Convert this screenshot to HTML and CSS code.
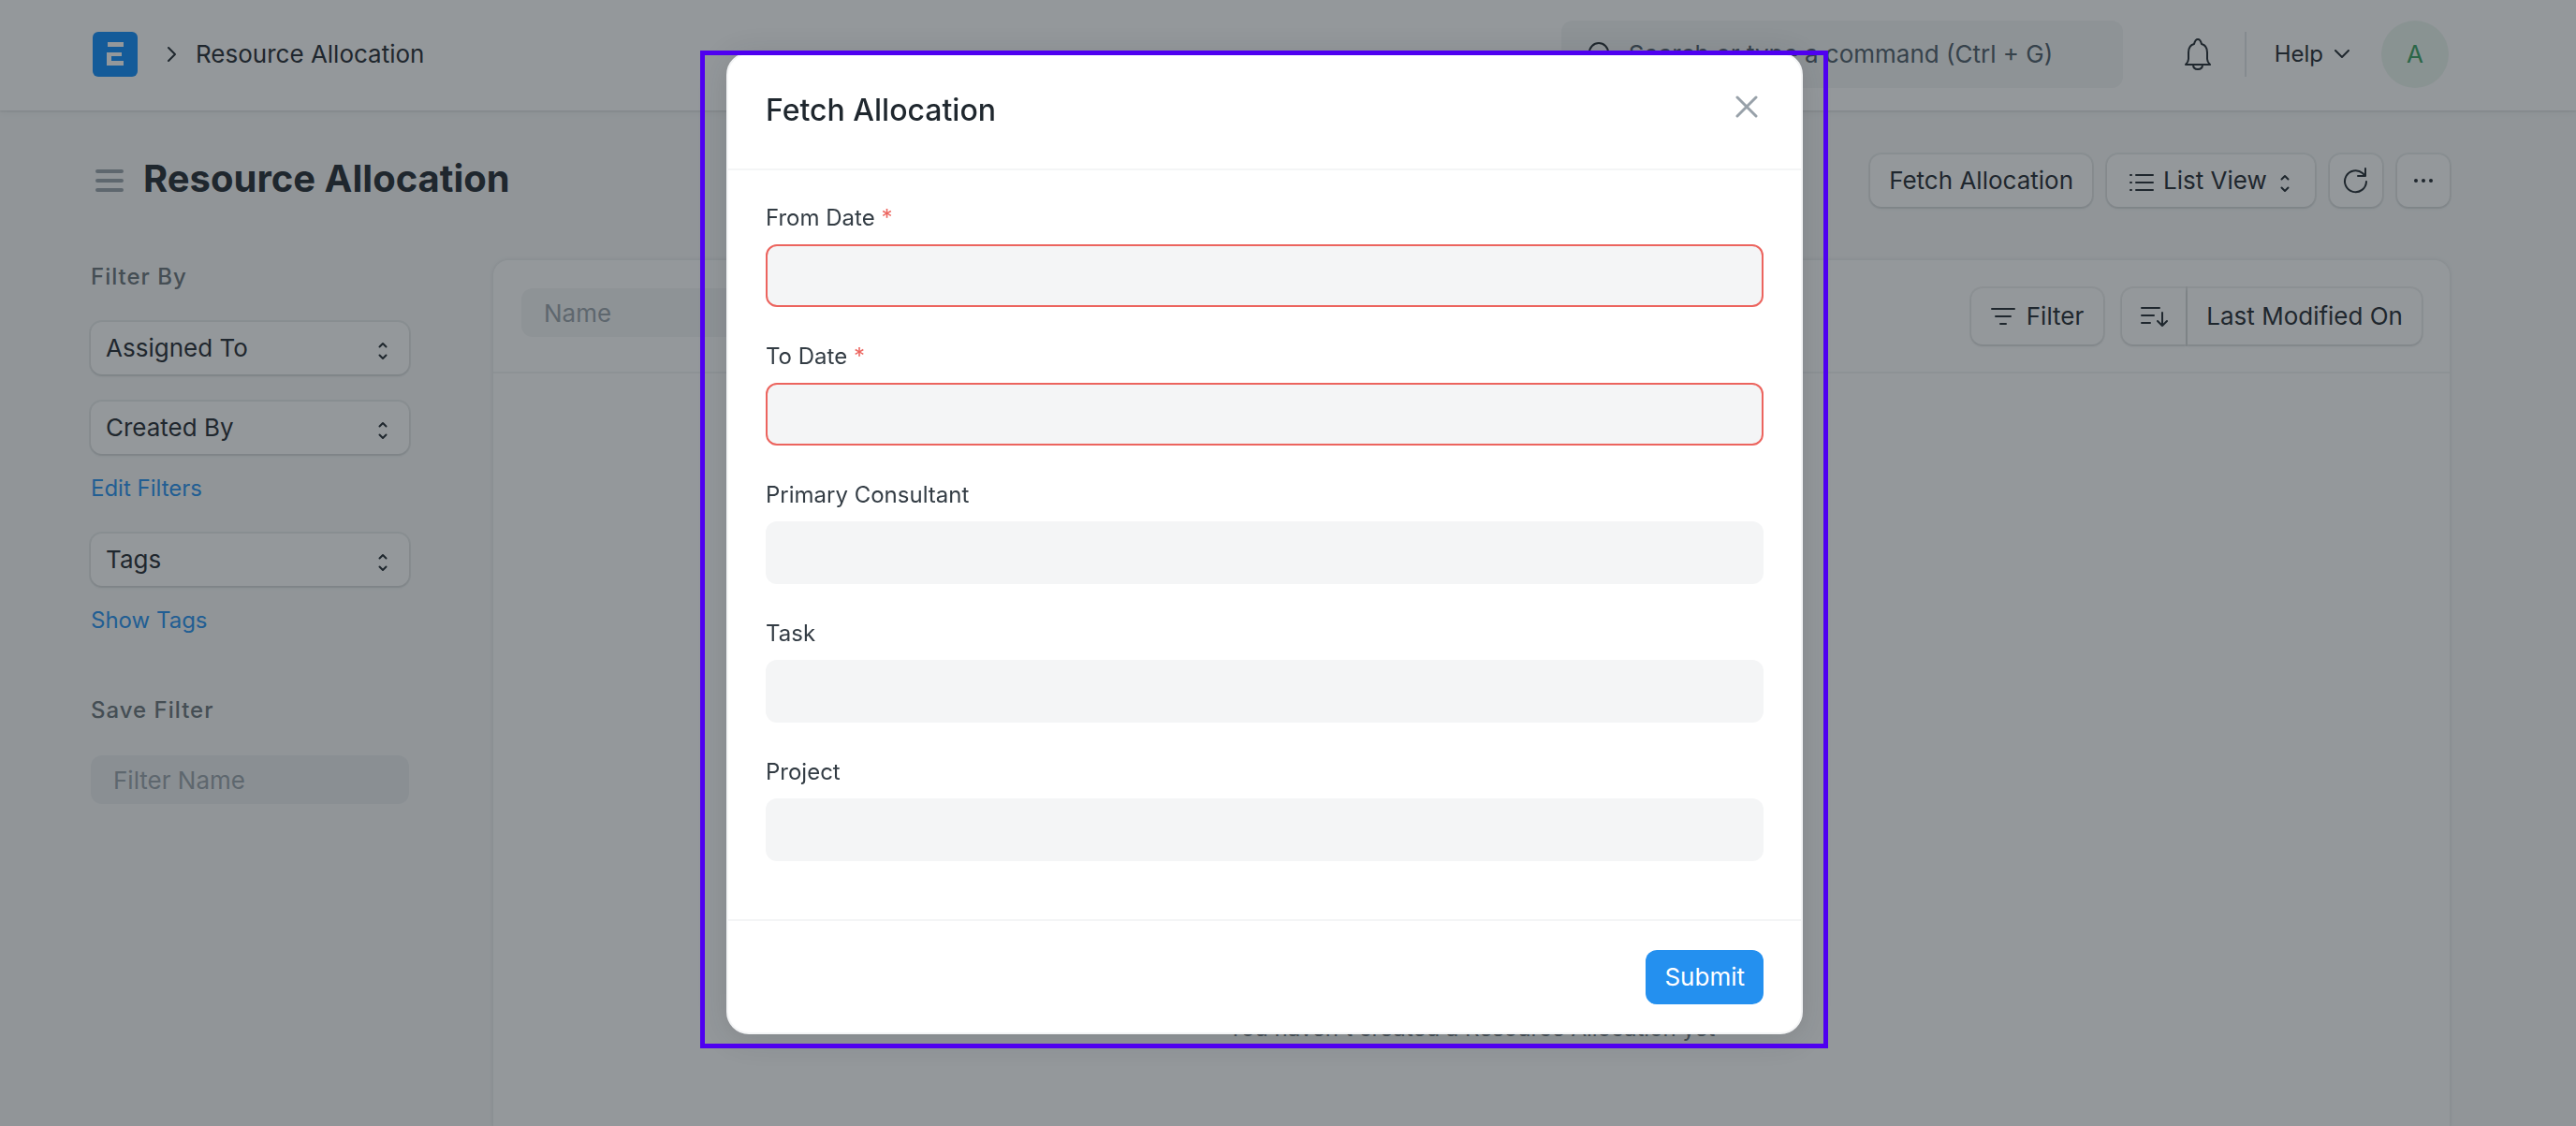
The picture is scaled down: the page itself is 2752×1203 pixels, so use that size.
FILE: index.html
```html
<!DOCTYPE html>
<html lang="en">
<head>
<meta charset="utf-8">
<meta name="viewport" content="width=device-width, initial-scale=1">
<title>Resource Allocation</title>
<link rel="stylesheet" href="styles.css">
</head>
<body>
<header class="navbar">
  <a class="logo" href="#" aria-label="Home">
    <svg width="48" height="48" viewBox="0 0 48 48"><rect width="48" height="48" rx="6" fill="#0b8afb"/><path d="M16 11h17v5H16zM15 22h16v4H20v5h13v5H15z" fill="#fff"/></svg>
  </a>
  <svg class="crumb-arrow" width="12" height="18" viewBox="0 0 12 18"><path d="M2 2l7 7-7 7" class="line"/></svg>
  <a class="crumb" href="#">Resource Allocation</a>
  <label class="search">
    <svg width="28" height="28" viewBox="0 0 28 28"><circle cx="12" cy="12" r="10" class="line"/><path d="M19 19l7 7" class="line"/></svg>
    <input type="text" placeholder="Search or type a command (Ctrl + G)" aria-label="Search">
  </label>
  <button class="bell" aria-label="Notifications">
    <svg width="28" height="34" viewBox="0 0 28 34"><path d="M1 28c2-2 3-3 3-6v-7c0-5 2-8 6-9 1-4 2-5 4-5s3 1 4 5c4 1 6 4 6 9v7c0 3 1 4 3 6zM9 28c0 3 2 5 5 5s5-2 5-5" class="line"/></svg>
  </button>
  <span class="divider"></span>
  <button class="help">Help
    <svg width="16" height="10" viewBox="0 0 16 10"><path d="M1 1l7 7 7-7" class="line"/></svg>
  </button>
  <button class="avatar">A</button>
</header>

<main class="page">
  <div class="page-head">
    <button class="menu" aria-label="Toggle sidebar">
      <svg width="32" height="24" viewBox="0 0 32 24"><path d="M3 2h26M3 12h26M3 22h26"/></svg>
    </button>
    <h1>Resource Allocation</h1>
    <div class="actions">
      <button class="btn">Fetch Allocation</button>
      <div class="select view-select">
        <svg class="lead" width="26" height="22" viewBox="0 0 26 22"><path d="M7 3h18M7 11h18M7 19h18" class="line"/><path d="M1 3h1M1 11h1M1 19h1" class="line"/></svg>
        <select aria-label="View"><option>List View</option></select>
        <svg class="updown" width="12" height="22" viewBox="0 0 12 22"><path d="M2.500 6.500L6 3l3.500 3.500M2.500 15.500L6 19l3.500-3.500" class="line"/></svg>
      </div>
      <button class="btn icon" aria-label="Refresh"><svg width="28" height="28" viewBox="0 0 28 28"><path d="M25 15a11.500 11.500 0 1 1-4-9l3 3M24 1v8h-8" class="line"/></svg></button>
      <button class="btn icon" aria-label="More"><svg class="dots" width="22" height="6" viewBox="0 0 22 6"><circle cx="3" cy="3" r="2"/><circle cx="11" cy="3" r="2"/><circle cx="19" cy="3" r="2"/></svg></button>
    </div>
  </div>

  <div class="layout">
    <aside class="sidebar">
      <h2>Filter By</h2>
      <div class="select">
        <select aria-label="Assigned To"><option>Assigned To</option></select>
        <svg class="updown" width="12" height="22" viewBox="0 0 12 22"><path d="M2.500 6.500L6 3l3.500 3.500M2.500 15.500L6 19l3.500-3.500" class="line"/></svg>
      </div>
      <div class="select">
        <select aria-label="Created By"><option>Created By</option></select>
        <svg class="updown" width="12" height="22" viewBox="0 0 12 22"><path d="M2.500 6.500L6 3l3.500 3.500M2.500 15.500L6 19l3.500-3.500" class="line"/></svg>
      </div>
      <a class="side-link" href="#">Edit Filters</a>
      <div class="select">
        <select aria-label="Tags"><option>Tags</option></select>
        <svg class="updown" width="12" height="22" viewBox="0 0 12 22"><path d="M2.500 6.500L6 3l3.500 3.500M2.500 15.500L6 19l3.500-3.500" class="line"/></svg>
      </div>
      <a class="side-link" href="#">Show Tags</a>
      <h2 class="save">Save Filter</h2>
      <input class="filter-name" type="text" placeholder="Filter Name" aria-label="Filter Name">
    </aside>
    <section class="card">
      <div class="list-head">
        <input class="name" type="text" placeholder="Name" aria-label="Name">
        <button class="btn tall filter"><svg width="26" height="20" viewBox="0 0 26 20"><path d="M1 2h24M5 10h16M10 18h6" class="line"/></svg>Filter</button>
        <div class="group">
          <button class="btn tall sort" aria-label="Sort direction"><svg width="30" height="24" viewBox="0 0 30 24"><path d="M2 3h19M2 11h13M2 19h9M24 8v14M19 17l5 5 5-5" class="line"/></svg></button>
          <button class="btn tall sort-by">Last Modified On</button>
        </div>
      </div>
      <p class="empty">You haven't created a Resource Allocation yet</p>
    </section>
  </div>
</main>

<div class="backdrop">
  <div class="modal" role="dialog" aria-labelledby="dialog-title">
    <div class="modal-head">
      <h3 id="dialog-title">Fetch Allocation</h3>
      <button class="close" aria-label="Close"><svg width="24" height="24" viewBox="0 0 24 24"><path d="M2 2l20 20M22 2L2 22"/></svg></button>
    </div>
    <form id="fetch" class="modal-body">
      <label for="from">From Date <span>*</span></label>
      <input id="from" class="required" type="text">
      <label for="to">To Date <span>*</span></label>
      <input id="to" class="required" type="text">
      <label for="consultant">Primary Consultant</label>
      <input id="consultant" type="text">
      <label for="task">Task</label>
      <input id="task" type="text">
      <label for="project">Project</label>
      <input id="project" type="text">
    </form>
    <div class="modal-foot">
      <button class="submit" type="submit" form="fetch">Submit</button>
    </div>
  </div>
</div>
</body>
</html>
```
FILE: styles.css
```css
* { box-sizing: border-box; }
body {
  display: flex;
  flex-direction: column;
  margin: 0;
  height: 100vh;
  overflow: hidden;
  background: #f9fafa;
  color: #1f272e;
  font: 26px/36px Inter, "Liberation Sans", sans-serif;
}
h1, h2, h3, p { margin: 0; }
button, input, select { font: inherit; color: inherit; border: 0; margin: 0; padding: 0; background: none; }
button { display: flex; align-items: center; justify-content: center; }
a { color: inherit; text-decoration: none; }
svg { display: block; flex: none; fill: none; }
.line { fill: none; stroke: #1f272e; stroke-width: 2; stroke-linecap: round; stroke-linejoin: round; }
.dots { fill: #1f272e; }
input { border-radius: 12px; background: #f4f5f6; }
input::placeholder { color: #98a1a9; opacity: 1; }

.navbar {
  position: relative;
  flex: none;
  display: flex;
  align-items: center;
  height: 118px;
  padding: 0 136px 2px 99px;
  background: #fff;
  box-shadow: 0 1px 2px rgba(31, 39, 46, .12), 0 3px 8px rgba(31, 39, 46, .05);
}
.logo { margin-right: 31px; }
.crumb { margin-left: 19px; }
.search {
  display: flex;
  align-items: center;
  gap: 16px;
  width: 600px;
  height: 72px;
  margin-left: auto;
  padding: 0 28px;
  border-radius: 12px;
  background: #f4f5f6;
}
.search input { flex: 1; min-width: 0; background: none; }
.search input::placeholder { color: #4c5a67; }
.bell { margin-left: 66px; }
.divider { width: 2px; height: 48px; margin: 0 30px 0 36px; background: #e2e6e9; }
.help { gap: 12px; font-size: 24px; }
.avatar { width: 72px; height: 72px; margin-left: 34px; border-radius: 50%; background: #eaf5ee; color: #38a160; }

.page {
  flex: 1;
  min-height: 0;
  display: flex;
  flex-direction: column;
  padding: 0 135px 0 97px;
}
.page-head { flex: none; display: flex; align-items: center; height: 160px; padding: 0 0 10px 4px; }
h1 { margin: 0 0 4px 20px; font-size: 40px; line-height: 48px; font-weight: 700; }
.menu path { stroke: #98a1a9; stroke-width: 4; stroke-linecap: round; }
.actions { display: flex; gap: 16px; margin-left: auto; }
.btn, .select select {
  height: 56px;
  padding: 0 20px;
  border-radius: 12px;
  background: #fff;
  box-shadow: 0 0 0 2px rgba(31, 39, 46, .07), 0 2px 3px rgba(31, 39, 46, .1);
  white-space: nowrap;
}
.btn.icon { width: 56px; padding: 0; }
.btn.tall { height: 60px; }
.select { position: relative; }
.select select {
  appearance: none;
  display: block;
  width: 100%;
  padding: 0 56px 0 16px;
}
.updown { position: absolute; right: 22px; top: 20px; }
.view-select select { padding: 0 51px 0 60px; }
.view-select .updown { right: 26px; }
.lead { position: absolute; left: 24px; top: 19px; }

.layout { flex: 1; min-height: 0; display: flex; gap: 90px; }
.sidebar { display: flex; flex-direction: column; width: 340px; }
h2 { margin: 0 0 30px; font-size: 24px; line-height: 36px; font-weight: 500; letter-spacing: 1px; color: #687178; }
.sidebar .select { margin-bottom: 29px; }
.side-link { margin: -10px 0 30px; font-size: 24px; color: #2490ef; }
h2.save { margin: 30px 0; }
.filter-name, .name { height: 52px; padding: 0 24px; }
.filter-name { background: #ebeef0; }
.card {
  flex: 1;
  overflow: hidden;
  border-radius: 16px 16px 0 0;
  background: #fff;
  box-shadow: 0 0 0 2px rgba(31, 39, 46, .02), 0 0 6px rgba(31, 39, 46, .08);
}
.list-head { display: flex; align-items: center; height: 121px; padding: 0 30px; border-bottom: 2px solid #f1f3f4; }
.name { width: 320px; margin-bottom: 7px; }
.btn.filter { gap: 12px; margin: 0 20px 0 auto; padding: 0 21px; }
.group { display: flex; gap: 2px; }
.btn.sort { width: 68px; padding: 0; border-radius: 12px 0 0 12px; }
.btn.sort-by { border-radius: 0 12px 12px 0; }
.empty { padding-top: 682px; text-align: center; font-size: 24px; color: #687178; }

.backdrop {
  position: fixed;
  inset: 0;
  display: flex;
  align-items: flex-start;
  justify-content: center;
  padding: 56px 50px 0 0;
  background: rgba(31, 39, 46, .48);
}
.modal {
  position: relative;
  width: 1150px;
  border: 2px solid #f4f5f6;
  border-radius: 24px;
  background: #fff;
  box-shadow: 0 4px 32px rgba(31, 39, 46, .16);
}
/* Highlight frame around the dialog */
.modal::after {
  content: "";
  position: absolute;
  inset: -4px -29px -17px -30px;
  border: 5px solid #4f00f0;
  pointer-events: none;
}
.modal-head { display: flex; align-items: center; justify-content: space-between; height: 124px; padding: 0 36px 2px 40px; border-bottom: 2px solid #f4f5f6; }
h3 { font-size: 32px; line-height: 40px; font-weight: 500; }
.close { width: 44px; height: 44px; margin-bottom: 8px; }
.close path { stroke: #98a1a9; stroke-width: 3; stroke-linecap: round; }
.modal-body { display: flex; flex-direction: column; padding: 33px 40px 27px; }
.modal-body label { height: 46px; font-size: 24px; line-height: 36px; color: #333c44; }
.modal-body label span { color: #ec645e; }
.modal-body input { height: 67px; margin-bottom: 35px; padding: 0 20px; }
.modal-body .required { border: 2px solid #ec645e; }
.modal-foot { display: flex; align-items: center; justify-content: flex-end; height: 121px; padding: 0 40px; border-top: 2px solid #f4f5f6; }
.submit { height: 58px; padding: 0 20px; border-radius: 12px; background: #2490ef; color: #fff; }
```
